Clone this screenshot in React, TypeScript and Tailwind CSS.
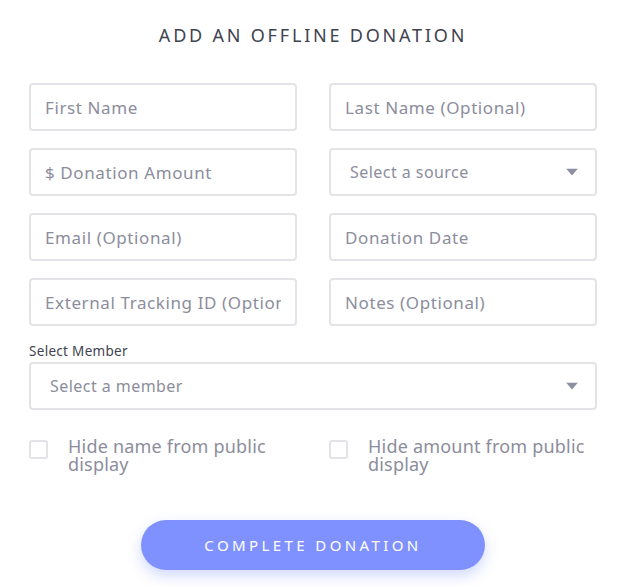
import React, { useState } from "react";

const inputCls =
  "w-full h-12 px-[14px] border-2 border-[#e3e3e8] rounded-[4px] bg-white text-[17px] tracking-[0.6px] text-[#4a4e5a] placeholder:text-[#8c8d9c] focus:outline-none";

const Caret = () => (
  <svg width="12" height="7" viewBox="0 0 12 7" className="absolute right-[17px] top-1/2 -translate-y-1/2">
    <path d="M0 0 L12 0 L6 7 Z" fill="#8d8fa3" />
  </svg>
);

const SelectBox: React.FC<{ label: string }> = ({ label }) => (
  <div className="relative w-full h-12 border-2 border-[#e3e3e8] rounded-[4px] bg-white flex items-center pl-[19px] text-[16px] tracking-[0.45px] text-[#8c8d9c]">
    {label}
    <Caret />
  </div>
);

const Check: React.FC<{ label: string; checked: boolean; onChange: () => void }> = ({ label, checked, onChange }) => (
  <label className="flex items-start gap-5 cursor-pointer">
    <span
      onClick={onChange}
      className={`mt-[3px] w-[19px] h-[19px] shrink-0 rounded-[3px] border-2 border-[#e3e3e8] ${checked ? "bg-[#7f91fe]" : "bg-white"}`}
    />
    <span className="text-[18px] tracking-[0.2px] leading-[18px] text-[#8c8d9c]">{label}</span>
  </label>
);

const App: React.FC = () => {
  const [hideName, setHideName] = useState(false);
  const [hideAmount, setHideAmount] = useState(false);

  return (
    <div className="w-[635px] h-[586px] bg-white font-['Noto_Sans',sans-serif] overflow-hidden">
      <div className="px-[29px] pt-[24px] w-[626px]">
        <h2 className="text-center text-[18px] tracking-[2.8px] text-[#3f4350] leading-[22px]">
          ADD AN OFFLINE DONATION
        </h2>

        <div className="grid grid-cols-2 gap-x-8 gap-y-[17px] mt-[37px]">
          <input className={inputCls} placeholder="First Name" />
          <input className={inputCls} placeholder="Last Name (Optional)" />
          <input className={inputCls} placeholder="$ Donation Amount" />
          <SelectBox label="Select a source" />
          <input className={inputCls} placeholder="Email (Optional)" />
          <input className={inputCls} placeholder="Donation Date" />
          <input className={inputCls} placeholder="External Tracking ID (Optional)" />
          <input className={inputCls} placeholder="Notes (Optional)" />
        </div>

        {/* Member select */}
        <div className="mt-[17px]">
          <div className="text-[13.5px] tracking-[0.3px] text-[#3f4350] leading-[16px] mb-[3px]">Select Member</div>
          <SelectBox label="Select a member" />
        </div>

        <div className="grid grid-cols-2 gap-x-8 mt-[27px]">
          <Check label="Hide name from public display" checked={hideName} onChange={() => setHideName(!hideName)} />
          <Check label="Hide amount from public display" checked={hideAmount} onChange={() => setHideAmount(!hideAmount)} />
        </div>

        <div className="flex justify-center mt-[47px]">
          <button className="w-[344px] h-[50px] rounded-full bg-[#7f91fe] text-white text-[15px] tracking-[3.4px] shadow-[0_6px_14px_rgba(127,145,254,0.35)]">
            COMPLETE DONATION
          </button>
        </div>
      </div>
    </div>
  );
};

export default App;
